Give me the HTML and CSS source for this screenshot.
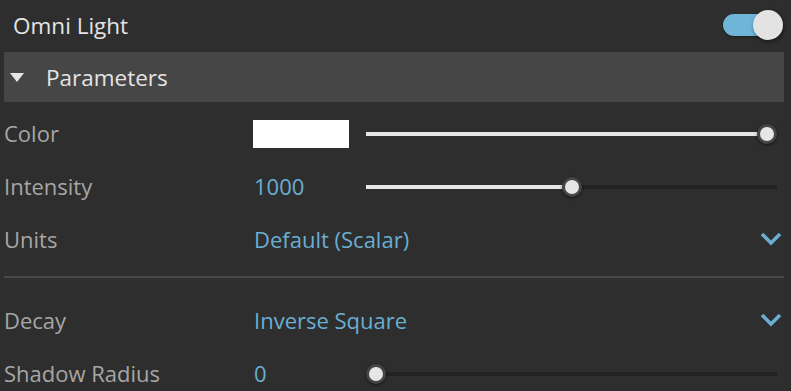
FILE: index.html
```html
<!DOCTYPE html>
<html lang="en">
<head>
	<meta charset="UTF-8">
	<title>Omni Light</title>
	<link rel="stylesheet" href="styles.css">
</head>
<body>
	<div class="panel">
		<div class="head">
			<span class="head-title">Omni Light</span>
			<div class="toggle on">
				<div class="toggle-track"></div>
				<div class="toggle-knob"></div>
			</div>
		</div>

		<div class="section-bar">
			<span class="caret"></span>
			<span class="section-title">Parameters</span>
		</div>

		<div class="rows">
			<div class="row">
				<span class="label">Color</span>
				<div class="value"><div class="swatch"></div></div>
				<div class="slider">
					<div class="slider-fill" style="width: 100%"></div>
					<div class="slider-knob" style="left: calc((100% - 20px) * 1)"></div>
				</div>
			</div>
			<div class="row">
				<span class="label">Intensity</span>
				<div class="value num">1000</div>
				<div class="slider">
					<div class="slider-fill" style="width: 50%"></div>
					<div class="slider-knob" style="left: calc((100% - 20px) * 0.5)"></div>
				</div>
			</div>
			<div class="row">
				<span class="label">Units</span>
				<div class="value select">Default (Scalar)</div>
				<svg class="chevron" width="22" height="14" viewBox="0 0 22 14"><polyline points="2,2 11,11 20,2" fill="none" stroke="#6aaed2" stroke-width="3.6"/></svg>
			</div>

			<div class="divider"></div>

			<div class="row">
				<span class="label">Decay</span>
				<div class="value select">Inverse Square</div>
				<svg class="chevron" width="22" height="14" viewBox="0 0 22 14"><polyline points="2,2 11,11 20,2" fill="none" stroke="#6aaed2" stroke-width="3.6"/></svg>
			</div>
			<div class="row">
				<span class="label">Shadow Radius</span>
				<div class="value num">0</div>
				<div class="slider">
					<div class="slider-fill" style="width: 0"></div>
					<div class="slider-knob" style="left: 0"></div>
				</div>
			</div>
		</div>
	</div>
</body>
</html>
```

FILE: styles.css
```css
*{
	margin: 0;
	padding: 0;
	box-sizing: border-box;
}
body{
	background: #2e2e2e;
	font-family: "Open Sans", "Noto Sans", "Liberation Sans", sans-serif;
	font-size: 22px;
	overflow: hidden;
}
.panel{
	width: 791px;
}

/* header with toggle */
.head{
	height: 52px;
	display: flex;
	align-items: center;
	justify-content: space-between;
	padding: 0 8px 0 13px;
}
.head-title{
	color: #e4e4e4;
	font-size: 22.5px;
	margin-top: -1px;
}
.toggle{
	position: relative;
	width: 60px;
	height: 30px;
	margin-top: -2px;
}
.toggle-track{
	position: absolute;
	left: 0;
	top: 4px;
	width: 52px;
	height: 22px;
	border-radius: 11px;
	background: #6eb5d8;
	box-shadow: 0 1px 2px #1c1c1c;
}
.toggle-knob{
	position: absolute;
	right: 0;
	top: 0;
	width: 30px;
	height: 30px;
	border-radius: 50%;
	background: #e3e3e3;
	box-shadow: 1px 2px 4px rgba(0,0,0,0.45);
}

/* collapsible section bar */
.section-bar{
	height: 50px;
	margin: 0 7px 0 4px;
	background: #464646;
	display: flex;
	align-items: center;
	padding-left: 6px;
}
.caret{
	width: 0;
	height: 0;
	border-left: 7.5px solid transparent;
	border-right: 7.5px solid transparent;
	border-top: 9px solid #e6e6e6;
	margin-top: 1px;
}
.section-title{
	color: #e4e4e4;
	font-size: 22.5px;
	margin-left: 22px;
}

/* property rows */
.rows{
	padding: 5px 7px 0 4px;
}
.row{
	height: 53px;
	display: flex;
	align-items: center;
}
.label{
	width: 250px;
	color: #a6a6a6;
	flex: none;
	margin-top: -1px;
}
.value{
	width: 112px;
	flex: none;
	color: #6aaed2;
	margin-top: -1px;
}
.value.select{
	flex: 1;
}
.swatch{
	width: 96px;
	height: 28px;
	background: #fff;
	margin-left: -1px;
	margin-top: 1px;
}
.chevron{
	margin-right: 2px;
	margin-top: -2px;
}

.slider{
	position: relative;
	flex: none;
	width: 411px;
	height: 4px;
	background: #222;
}
.slider-fill{
	height: 100%;
	background: #e6e6e6;
	max-width: calc(100% - 10px);
}
.slider-knob{
	position: absolute;
	top: -8px;
	width: 20px;
	height: 20px;
	border-radius: 50%;
	background: #e6e6e6;
	border: 3px solid #454545;
	box-shadow: 0 1px 3px rgba(0,0,0,0.6);
}

.divider{
	height: 2px;
	background: #484848;
	margin: 10px 0 16px;
}
```
